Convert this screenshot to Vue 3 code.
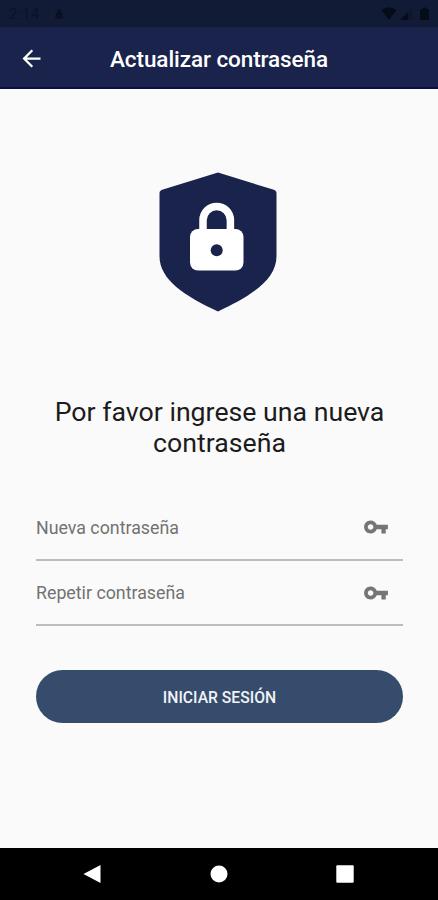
<script setup>
const fields = [
  { id: 'new-password', label: 'Nueva contraseña' },
  { id: 'repeat-password', label: 'Repetir contraseña' },
]
</script>

<template>
  <div class="screen">
    <div class="status">
      <span class="clock">2:14</span>
      <svg class="notice" width="8" height="12" viewBox="0 0 8 12">
        <path d="M2.5 1h3v3.5H8L6.8 7 8 9.5 5.5 11h-3L0 9.5 1.2 7 0 4.5h2.500z" />
      </svg>
      <svg class="signals" width="50" height="14" viewBox="0 0 50 14">
        <path d="M0.500 3Q8 -2.500 15.500 3L8 13z" />
        <path d="M19 13L27 5v8z" />
        <path class="faint" d="M27 5L31.500 0.500V13H27z" />
        <path d="M39 2h2.500V0.500h4V2H48v11h-9z" />
      </svg>
    </div>
    <header class="bar">
      <svg class="back" width="27" height="27" viewBox="0 0 24 24">
        <path d="M20 11H7.830l5.590-5.590L12 4l-8 8 8 8 1.410-1.410L7.830 13H20v-2z" />
      </svg>
      <h1 class="title">Actualizar contraseña</h1>
    </header>

    <main class="content">
      <svg class="shield" width="118" height="140" viewBox="0 0 118 140">
        <path
          class="navy"
          d="M59 0.500L114 17.500Q117.500 18.500 117.500 21V84C117.500 108 92 124 59 139.500C26 124 0.500 108 0.500 84V21Q0.500 18.500 4 17.500z"
        />
        <path class="shackle" d="M44 60V48.200a13.700 13.700 0 0 1 27.400 0V60" />
        <rect x="31" y="57" width="53.500" height="41.500" rx="8" fill="#fff" />
        <circle class="navy" cx="57.700" cy="78.300" r="6" />
      </svg>

      <h2 class="heading">
        <span class="line first">Por favor ingrese una nueva</span>
        <span class="line second">contraseña</span>
      </h2>

      <form class="form" @submit.prevent>
        <div v-for="field in fields" :key="field.id" class="field">
          <span class="label">{{ field.label }}</span>
          <svg class="key" width="26" height="26" viewBox="0 0 24 24">
            <path
              d="M12.650 10C11.830 7.670 9.610 6 7 6c-3.310 0-6 2.690-6 6s2.690 6 6 6c2.610 0 4.830-1.670 5.650-4H17v4h4v-4h2v-4H12.650zM7 14.600c-1.430 0-2.600-1.170-2.600-2.600s1.170-2.600 2.600-2.600 2.600 1.170 2.600 2.600-1.170 2.600-2.600 2.600z"
            />
          </svg>
        </div>
        <button class="submit" type="submit">INICIAR SESIÓN</button>
      </form>
    </main>

    <nav class="nav">
      <svg width="18" height="20" viewBox="0 0 18 20"><path d="M0.500 10L17.500 1v18z" /></svg>
      <svg width="18" height="20" viewBox="0 0 18 20"><circle cx="9" cy="10" r="8.500" /></svg>
      <svg width="18" height="20" viewBox="0 0 18 20"><rect x="0.300" y="1.300" width="17.400" height="17.400" rx="1" /></svg>
    </nav>
  </div>
</template>

<style>
body {
  margin: 0;
}
</style>

<style scoped>
.screen {
  display: flex;
  flex-direction: column;
  width: 438px;
  height: 900px;
  overflow: hidden;
  background: #fafafa;
  font-family: Roboto, "Liberation Sans", sans-serif;
}
svg {
  display: block;
  flex: none;
}
.status {
  display: flex;
  align-items: center;
  box-sizing: border-box;
  height: 27px;
  padding: 1px 8px 0 9px;
  background: #121b36;
  color: #0b1228;
  fill: #050c19;
}
.clock {
  width: 46px;
  font-size: 15px;
  letter-spacing: 0.5px;
}
.notice {
  fill: #081022;
}
.signals {
  margin-left: auto;
  margin-right: -1px;
}
.faint {
  fill: #0d162d;
}
.bar {
  display: flex;
  align-items: center;
  box-sizing: border-box;
  height: 62px;
  padding: 2px 0 0 18px;
  background: #19234b;
  border-bottom: 2px solid #0b0f47;
}
.back {
  fill: #fff;
}
.title {
  margin: 1px 0 0 65px;
  color: #fff;
  font-size: 22.500px;
  font-weight: 500;
  letter-spacing: -0.080px;
  line-height: 28px;
  white-space: nowrap;
}
.content {
  display: flex;
  flex: 1;
  flex-direction: column;
  padding: 83px 35px 0 36px;
}
.shield {
  align-self: center;
  margin-right: 3px;
}
.navy {
  fill: #19234b;
}
.shackle {
  fill: none;
  stroke: #fff;
  stroke-width: 7.500;
}
.heading {
  display: flex;
  flex-direction: column;
  align-items: center;
  margin: 85px 0 0;
  color: #1c1c1c;
  font-size: 26.700px;
  font-weight: 400;
  line-height: 31px;
  white-space: nowrap;
}
.form {
  display: flex;
  flex-direction: column;
  margin-top: 36px;
}
.field {
  display: flex;
  align-items: center;
  justify-content: space-between;
  box-sizing: border-box;
  height: 65.500px;
  padding: 1px 14px 0 0;
  border-bottom: 2px solid #bcbcbc;
}
.label {
  color: #727272;
  font-size: 17.800px;
}
.key {
  fill: #757575;
}
.submit {
  height: 53px;
  margin-top: 44px;
  padding: 2px 0 0;
  border: 0;
  border-radius: 27px;
  background: #364c6c;
  color: #f1f3f7;
  font: 500 15.700px Roboto, "Liberation Sans", sans-serif;
}
.nav {
  display: flex;
  align-items: center;
  justify-content: space-between;
  box-sizing: border-box;
  height: 52px;
  padding: 0 84px 0 83px;
  background: #000;
  fill: #fff;
}
</style>
